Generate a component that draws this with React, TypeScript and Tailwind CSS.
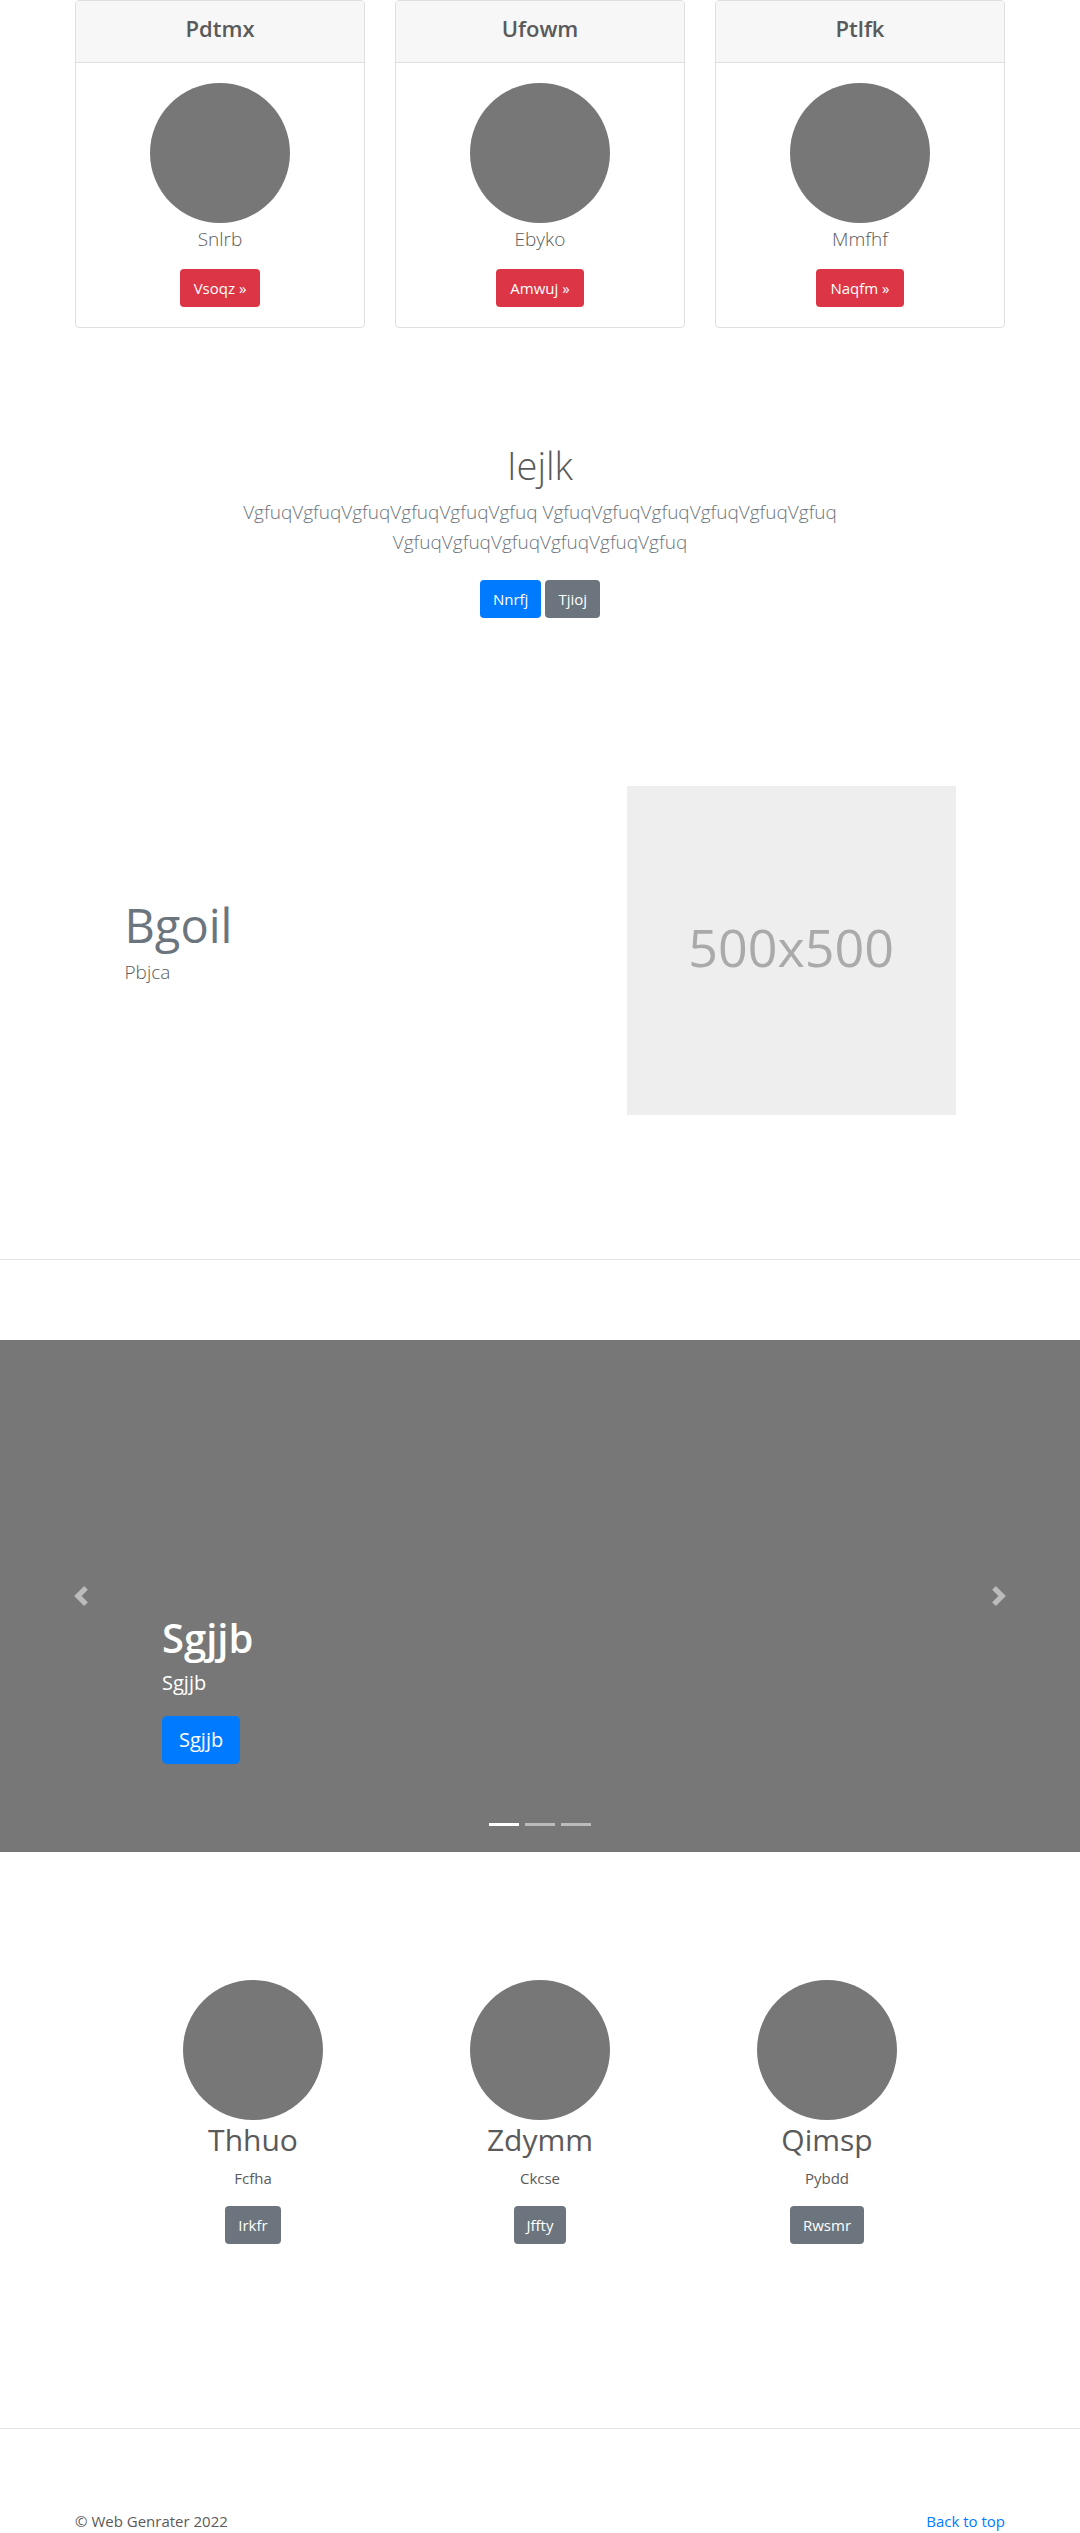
import type { ReactNode } from 'react';

const cards = [
  { title: 'Pdtmx', text: 'Snlrb', action: 'Vsoqz »' },
  { title: 'Ufowm', text: 'Ebyko', action: 'Amwuj »' },
  { title: 'Ptlfk', text: 'Mmfhf', action: 'Naqfm »' },
];

const people = [
  { title: 'Thhuo', text: 'Fcfha', action: 'Irkfr' },
  { title: 'Zdymm', text: 'Ckcse', action: 'Jffty' },
  { title: 'Qimsp', text: 'Pybdd', action: 'Rwsmr' },
];

const tones = {
  red: 'bg-[#dc3545] px-[14px]',
  blue: 'bg-[#007bff] px-[13px]',
  gray: 'bg-[#6c757d] px-[13px]',
};

function Button({ tone, children }: { tone: keyof typeof tones; children: ReactNode }) {
  return (
    <button type="button" className={`h-[38px] rounded align-top text-[15px] text-white ${tones[tone]}`}>
      {children}
    </button>
  );
}

function Circle() {
  return <div className="mx-auto size-[140px] rounded-full bg-[#777]" />;
}

function Carousel() {
  return (
    <section aria-label="Carousel" className="relative h-[512px] bg-[#777] text-white">
      <div className="flex h-full flex-col items-start px-[15%] pt-[274px]">
        <h2 className="mb-1.5 text-[40px] leading-[48px] font-semibold">Sgjjb</h2>
        <p className="mb-[18px] text-[20px] leading-[30px]">Sgjjb</p>
        <button type="button" className="h-12 rounded-[5px] bg-[#007bff] px-[17px] text-[20px]">
          Sgjjb
        </button>
      </div>
      <button
        type="button"
        aria-label="Previous"
        className="absolute inset-y-0 left-0 flex w-[15%] items-center justify-center opacity-50"
      >
        <svg viewBox="0 0 8 8" className="size-5 fill-white">
          <path d="M5.25 0l-4 4 4 4 1.5-1.5-2.5-2.5 2.5-2.5-1.5-1.5z" />
        </svg>
      </button>
      <button
        type="button"
        aria-label="Next"
        className="absolute inset-y-0 right-0 flex w-[15%] items-center justify-center opacity-50"
      >
        <svg viewBox="0 0 8 8" className="size-5 fill-white">
          <path d="M2.75 0l-1.5 1.5 2.5 2.5-2.5 2.5 1.5 1.5 4-4-4-4z" />
        </svg>
      </button>
      <div className="absolute inset-x-0 bottom-[26px] flex justify-center gap-1.5">
        <button type="button" aria-label="Slide 1" className="h-[3px] w-[30px] bg-white" />
        <button type="button" aria-label="Slide 2" className="h-[3px] w-[30px] bg-white/50" />
        <button type="button" aria-label="Slide 3" className="h-[3px] w-[30px] bg-white/50" />
      </div>
    </section>
  );
}

export default function App() {
  return (
    <div className="bg-white font-['Open_Sans',sans-serif] text-[15px] leading-6 text-[#5a5a5a]">
      <main>
        <section className="mx-auto grid max-w-[960px] grid-cols-3 gap-[30px] px-[15px] text-center">
          {cards.map((card) => (
            <article key={card.title} className="overflow-hidden rounded border border-[#dfdfdf]">
              <header className="border-b border-[#dfdfdf] bg-[#f7f7f7] pt-[13px] pb-[19px]">
                <h4 className="text-[22px] leading-[29px] font-semibold">{card.title}</h4>
              </header>
              <div className="p-5">
                <Circle />
                <p className="mb-3.5 text-[19px] leading-8 font-light">{card.text}</p>
                <Button tone="red">{card.action}</Button>
              </div>
            </article>
          ))}
        </section>

        <section className="mx-auto max-w-[640px] pt-[113px] text-center">
          <h1 className="mb-2 text-[38px] leading-[48px] font-light">Iejlk</h1>
          <p className="mb-[23px] text-[19px] leading-[30px] font-light text-[#6c757d]">
            VgfuqVgfuqVgfuqVgfuqVgfuqVgfuq VgfuqVgfuqVgfuqVgfuqVgfuqVgfuq VgfuqVgfuqVgfuqVgfuqVgfuqVgfuq
          </p>
          <div className="flex justify-center gap-1">
            <Button tone="blue">Nnrfj</Button>
            <Button tone="gray">Tjioj</Button>
          </div>
        </section>

        <section className="mx-auto grid max-w-[861px] grid-cols-12 pt-42">
          <div className="col-span-7 px-[15px] pt-[109px]">
            <h2 className="mb-0.5 text-[47px] leading-[60px] text-[#6c757d]">Bgoil</h2>
            <p className="text-[19px] leading-[30px] font-light">Pbjca</p>
          </div>
          <div className="col-span-5 px-[15px]">
            <div className="flex aspect-square items-center justify-center bg-[#eee] pb-1.5 text-[52px] text-[#aaa]">
              500x500
            </div>
          </div>
        </section>

        <hr className="mt-36 mb-20 border-[#e5e5e5]" />

        <Carousel />

        <section className="mx-auto grid max-w-[861px] grid-cols-3 pt-32 text-center">
          {people.map((person) => (
            <article key={person.title} className="px-[15px]">
              <Circle />
              <h2 className="mb-1.5 text-[30px] leading-10">{person.title}</h2>
              <p className="mb-4">{person.text}</p>
              <Button tone="gray">{person.action}</Button>
            </article>
          ))}
        </section>
      </main>

      <hr className="mt-46 mb-20 border-[#e5e5e5]" />

      <footer className="mx-auto flex max-w-[960px] justify-between px-[15px]">
        <p>© Web Genrater 2022</p>
        <a href="#" className="text-[#007bff]">
          Back to top
        </a>
      </footer>
    </div>
  );
}
